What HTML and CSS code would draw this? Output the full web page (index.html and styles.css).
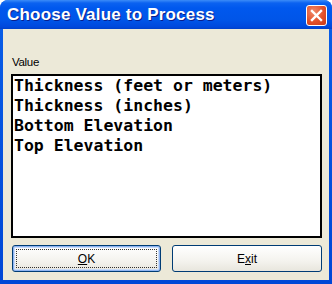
FILE: index.html
```html
<!DOCTYPE html>
<html>
<head>
<meta charset="utf-8">
<link rel="stylesheet" href="styles.css">
</head>
<body>
<div class="window">
  <div class="titlebar">
    <span class="title">Choose Value to Process</span>
    <div class="close">
      <svg width="13" height="13" viewBox="0 0 13 13"><path d="M2 2 L11 11 M11 2 L2 11" stroke="#fff" stroke-width="2.4" stroke-linecap="square"/></svg>
    </div>
  </div>
  <div class="client">
    <div class="label">Value</div>
    <div class="listbox">
      <div class="item">Thickness (feet or meters)</div>
      <div class="item">Thickness (inches)</div>
      <div class="item">Bottom Elevation</div>
      <div class="item">Top Elevation</div>
    </div>
    <div class="buttons">
      <button class="btn default"><span class="focus"><u>O</u>K</span></button>
      <button class="btn">E<u>x</u>it</button>
    </div>
  </div>
</div>
</body>
</html>
```
FILE: styles.css
```css
html, body { margin: 0; padding: 0; background: #fff; }
.window {
  width: 332px; height: 284px; box-sizing: border-box;
  border-radius: 8px 8px 0 0;
  background: linear-gradient(#0a5fe8, #0047d6);
  display: flex; flex-direction: column;
  overflow: hidden;
}
.titlebar {
  height: 29px; flex: none;
  display: flex; align-items: center; justify-content: space-between;
  padding: 0 5px 0 7px;
  background: linear-gradient(#3c8cf8 0px, #0b62f0 3px, #0058ee 8px, #0055e8 20px, #0048dc 27px, #0040c8 29px);
}
.title {
  font-family: "Liberation Sans", Arial, sans-serif;
  font-weight: bold; font-size: 17px; color: #fff;
  text-shadow: 1px 1px 0 #0a1e8c;
  letter-spacing: 0.2px;
  margin-top: 1px;
}
.close {
  width: 19px; height: 19px;
  border: 1px solid #fff; border-radius: 3px;
  background: radial-gradient(circle at 35% 30%, #f08a6a, #e2502a 55%, #c8391a);
  display: flex; align-items: center; justify-content: center;
  margin-top: 2px;
}
.client {
  flex: 1; margin: 0 3px 4px 3px;
  background: #ece9d8;
  display: flex; flex-direction: column;
  padding: 0 7px 8px 8px;
}
.label {
  font-family: "Liberation Sans", Arial, sans-serif;
  font-size: 11.5px; color: #000; letter-spacing: -0.3px;
  margin-top: 27px; margin-left: 1px;
  height: 18px; line-height: 13px;
}
.listbox {
  height: 164px; box-sizing: border-box;
  border: 2px solid #000;
  background: #fff;
  padding: 0 0 0 1px;
}
.item {
  font-family: "DejaVu Sans Mono", monospace;
  font-weight: bold; font-size: 16.5px;
  line-height: 20px; height: 20px; color: #000;
  white-space: nowrap;
}
.buttons {
  display: flex; justify-content: space-between;
  margin-top: 7px;
}
.btn {
  height: 27px; box-sizing: border-box;
  border: 1px solid #003c74; border-radius: 3px;
  background: linear-gradient(#fff, #f4f3ee 60%, #e8e6dd);
  font-family: "Liberation Sans", Arial, sans-serif;
  font-size: 12px; color: #000;
  padding: 0; margin: 0;
  display: flex; align-items: center; justify-content: center;
}
.btn:first-child { width: 149px; margin-left: 1px; }
.btn:last-child { width: 150px; }
.btn.default {
  box-shadow: inset 0 0 0 1px #8fb5f2, inset 0 0 0 2px #c9dbf8;
}
.focus {
  display: flex; align-items: center; justify-content: center;
  width: 141px; height: 19px; box-sizing: border-box;
  border: 1px dotted #333;
}
u { text-decoration: underline; text-underline-offset: 1px; }
```
